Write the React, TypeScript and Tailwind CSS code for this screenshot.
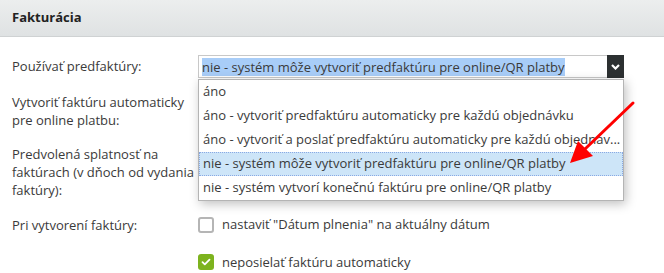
import React from "react";

const options = [
  "áno",
  "áno - vytvoriť predfaktúru automaticky pre každú objednávku",
  "áno - vytvoriť a poslať predfaktúru automaticky pre každú objednav...",
  "nie - systém môže vytvoriť predfaktúru pre online/QR platby",
  "nie - systém vytvorí konečnú faktúru pre online/QR platby",
];

function Checkbox({ checked }: { checked?: boolean }) {
  if (checked) {
    return (
      <span className="flex h-[16px] w-[16px] shrink-0 items-center justify-center rounded-[3px] bg-[#7db31e]">
        <svg width="10" height="8" viewBox="0 0 10 8" fill="none">
          <path d="M1.5 4.2 3.8 6.4 8.5 1.6" stroke="white" strokeWidth="1.8" strokeLinecap="round" strokeLinejoin="round" />
        </svg>
      </span>
    );
  }
  return <span className="h-[16px] w-[16px] shrink-0 rounded-[3px] border-2 border-[#b5b5b5] bg-white" />;
}

export default function App() {
  return (
    <div className="relative h-[273px] w-[664px] overflow-hidden bg-white text-[13px] text-[#3a3a3a] [font-family:'Open_Sans',sans-serif]">
      <div className="flex h-[37px] items-center border-b border-[#cfd2d3] bg-gradient-to-b from-[#eceeee] to-[#dfe2e3] pl-[12px] text-[13px] font-bold text-[#222]">
        Fakturácia
      </div>

      <div className="pl-[12px] pt-[18px]">
        <div className="flex items-center">
          <div className="w-[186px] whitespace-nowrap">Používať predfaktúry:</div>
          <div className="relative flex h-[23px] w-[426px] items-center border border-[#c8c8c8] bg-white pl-[3px]">
            <span className="bg-[#a8cdf8] leading-[18px]">{options[3]}</span>
            <span className="absolute right-[-1px] top-[-1px] flex h-[23px] w-[17px] items-center justify-center bg-[#2c3031]">
              <svg width="9" height="6" viewBox="0 0 9 6">
                <path d="M1 1 4.5 4.5 8 1" stroke="white" strokeWidth="2.2" fill="none" />
              </svg>
            </span>
            <ul className="absolute left-[-1px] top-[23px] z-10 w-[426px] border border-[#b4b4b4] bg-white shadow-[2px_3px_10px_rgba(0,0,0,0.25)]">
              {options.map((o, i) => (
                <li
                  key={o}
                  className={
                    i === 3
                      ? "flex h-[24px] items-center border border-dotted border-[#8aa9e3] bg-[#cde5f8] pl-[3px]"
                      : "flex h-[24px] items-center border border-transparent pl-[3px]"
                  }
                >
                  <span className="whitespace-nowrap">{o}</span>
                </li>
              ))}
            </ul>
          </div>
        </div>

        <div className="mt-[15px] w-[186px] whitespace-nowrap leading-[18px]">
          Vytvoriť faktúru automaticky
          <br />
          pre online platbu:
        </div>

        <div className="mt-[16px] w-[186px] whitespace-nowrap leading-[18px]">
          Predvolená splatnosť na
          <br />
          faktúrach (v dňoch od vydania
          <br />
          faktúry):
        </div>

        <div className="mt-[16px] flex items-center">
          <div className="w-[186px] whitespace-nowrap leading-[18px]">Pri vytvorení faktúry:</div>
          <div className="flex items-center gap-[8px]">
            <Checkbox />
            <span>nastaviť "Dátum plnenia" na aktuálny dátum</span>
          </div>
        </div>

        <div className="mt-[18px] flex items-center">
          <div className="w-[186px]" />
          <div className="flex items-center gap-[8px]">
            <Checkbox checked />
            <span className="leading-[18px]">neposielať faktúru automaticky</span>
          </div>
        </div>
      </div>

      <svg className="pointer-events-none absolute left-0 top-0 z-20" width="664" height="273">
        <line x1="633" y1="103" x2="585" y2="149" stroke="#f00" strokeWidth="3" strokeLinecap="round" />
        <polygon points="570,163 578,141 593,156" fill="#f00" />
      </svg>
    </div>
  );
}
